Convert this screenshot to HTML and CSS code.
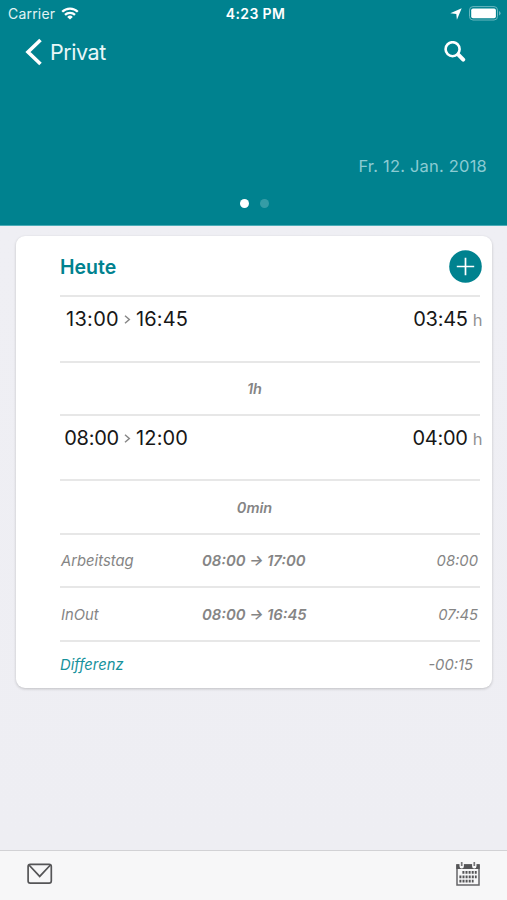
FILE: index.html
```html
<!DOCTYPE html>
<html lang="de">
<head>
<meta charset="utf-8">
<title>Privat</title>
<link rel="stylesheet" href="styles.css">
</head>
<body>
<div class="screen">
  <header class="header">
    <div class="status">
      <div class="status-left"><span class="carrier">Carrier</span>
        <svg class="wifi" width="18" height="13" viewBox="0 0 18 13" fill="none" stroke="#fff" stroke-width="2.3"><path d="M1.2 4.8a11.1 11.1 0 0 1 15.6 0M4 7.8a7.2 7.2 0 0 1 10 0"/><path d="M9 12.6 6.2 9.9a4 4 0 0 1 5.6 0z" fill="#fff" stroke="none"/></svg>
      </div>
      <span class="clock">4:23 PM</span>
      <div class="status-right">
        <svg width="12" height="12" viewBox="0 0 12 12"><path d="M11.7.3 6.9 11.7 6.3 6 .3 5.3z" fill="#fff"/></svg>
        <svg width="33" height="15" viewBox="0 0 33 15"><rect x=".5" y=".6" width="28" height="13.4" rx="3.5" fill="none" stroke="#69b7bf"/><rect x="2.2" y="2.4" width="24.7" height="9.8" rx="1.8" fill="#fff"/><path d="M30 5v4.6q1.6-.8 1.6-2.3T30 5" fill="#69b7bf"/></svg>
      </div>
    </div>
    <nav class="nav">
      <a class="back"><svg width="18" height="28" viewBox="0 0 18 28"><path d="M15.5 2 3 14l12.5 12" fill="none" stroke="#fff" stroke-width="3.6"/></svg><span class="back-label">Privat</span></a>
      <svg class="search" width="22" height="22" viewBox="0 0 22 22" fill="none" stroke="#fff"><circle cx="8.6" cy="8.2" r="7" stroke-width="2.6"/><path d="m14.3 13.7 4.9 4.9" stroke-width="4" stroke-linecap="round"/></svg>
    </nav>
    <div class="date"><span>Fr. 12. Jan. 2018</span></div>
    <div class="dots"><i class="dot dot-on"></i><i class="dot"></i></div>
  </header>
  <main class="main">
    <section class="card">
      <div class="row row-head"><h1 class="title">Heute</h1>
        <svg width="33" height="33" viewBox="0 0 33 33"><circle cx="16.5" cy="16.5" r="16.3" fill="#00828f"/><path d="M16.5 7.8v17.4M7.8 16.5h17.4" stroke="#fff" stroke-width="1.7"/></svg>
      </div>
      <div class="row row-entry"><span class="range"><span class="from from-wide">13:00</span><svg class="chev" width="7" height="9" viewBox="0 0 7 9"><path d="m1 .8 4.3 3.7L1 8.2"/></svg><span class="to">16:45</span></span><span class="amount"><span class="num">03:45</span><span class="unit">h</span></span></div>
      <div class="row row-pause"><span>1h</span></div>
      <div class="row row-entry row-second"><span class="range"><span class="from">08:00</span><svg class="chev" width="7" height="9" viewBox="0 0 7 9"><path d="m1 .8 4.3 3.7L1 8.2"/></svg><span class="to">12:00</span></span><span class="amount"><span class="num">04:00</span><span class="unit">h</span></span></div>
      <div class="row row-pause row-tall"><span>0min</span></div>
      <div class="row row-sum"><span>Arbeitstag</span><span class="span">08:00 → 17:00</span><span class="total">08:00</span></div>
      <div class="row row-sum row-tall"><span>InOut</span><span class="span">08:00 → 16:45</span><span class="total">07:45</span></div>
      <div class="row row-sum row-diff"><span>Differenz</span><span></span><span class="total">-00:15</span></div>
    </section>
  </main>
  <footer class="toolbar">
    <svg width="26" height="22" viewBox="0 0 26 22" fill="none" stroke="#555557" stroke-width="1.7"><rect x="1.1" y="1.3" width="23.2" height="18.8" rx="2.2"/><path d="m2 2 10.7 11.4L23.4 2"/></svg>
    <svg width="24" height="24" viewBox="0 0 24 24"><path d="M1 3h22v20H1z" fill="none" stroke="#666668" stroke-width="1.5"/><path d="M.3 2.3h23.4V7H.3z" fill="#555557"/><path d="M5.7.8v3.4M18.3.8v3.4" stroke="#f7f7f8" stroke-width="4.4" stroke-linecap="round"/><path d="M5.7 0v4M18.3 0v4" stroke="#777779" stroke-width="1.7"/><g stroke="#555557" stroke-width="2.8" stroke-dasharray="2 1.1"><path d="M6.4 10.4h14.3M3.4 14.8h17.3M3.4 19.2h14.2"/></g></svg>
  </footer>
</div>
</body>
</html>
```

FILE: styles.css
```css
* { box-sizing: border-box; }
body { margin: 0; font-family: Inter, "Liberation Sans", sans-serif; background: #eeeef3; }
svg { display: block; flex: none; }
.screen { width: 507px; height: 900px; display: flex; flex-direction: column; }
.header { height: 226px; flex: none; background: #00828f; color: #fff; border-bottom: 1px solid #4bacb7; display: flex; flex-direction: column; }
.status { height: 27px; padding: 0 5px 0 8px; display: grid; grid-template-columns: 1fr auto 1fr; align-items: center; font-size: 14px; line-height: 27px; }
.status-left { display: flex; align-items: center; gap: 6px; }
.carrier { letter-spacing: .2px; color: #e2f3f4; }
.clock { font-weight: 600; letter-spacing: .35px; padding-left: 1px; }
.status-right { display: flex; justify-content: flex-end; align-items: center; gap: 7px; }
.nav { height: 50px; padding: 0 41px 0 25px; display: flex; justify-content: space-between; align-items: center; }
.back { display: flex; align-items: center; gap: 7px; font-size: 21.5px; }
.back-label { color: #e9f7f8; letter-spacing: -.45px; }
.date { margin-top: 76px; height: 26px; line-height: 26px; padding-right: 20px; text-align: right; font-size: 16.5px; color: #8bcbd3; letter-spacing: .2px; }
.dots { height: 10px; margin-top: 19.5px; display: flex; gap: 10px; padding-left: 240px; }
.dot { width: 9px; height: 9px; border-radius: 50%; background: #359ca6; margin-right: 1px; }
.dot-on { background: #fff; }
.main { flex: 1; padding: 10px 15px 0 16px; background: linear-gradient(#efeff4, #eeeef3); }
.card { background: #fff; border-radius: 9px; height: 452px; padding: 0 12px 0 44px; box-shadow: 0 1px 3px rgba(0,0,0,.2); }
.row { height: 53px; border-bottom: 2px solid #e7e7e7; display: flex; align-items: center; color: #858585; }
.row-head { height: 61px; justify-content: space-between; padding-top: 1px; }
.row-head svg { margin-right: -2px; }
.title { margin: 0; padding-top: 1px; font-size: 19.5px; font-weight: 600; color: #00828f; }
.row-entry { height: 66px; align-items: flex-start; justify-content: space-between; padding-top: 9px; font-size: 20px; line-height: 27px; color: #171717; }
.row-second { height: 65px; }
.range, .amount { display: flex; height: 27px; align-items: center; }
.from { width: 59px; text-align: right; letter-spacing: -.25px; }
.from-wide { letter-spacing: .3px; }
.to { letter-spacing: .15px; }
.chev { margin: 0 5px; fill: none; stroke: #888; stroke-width: 1.5; }
.amount { margin-right: -2.5px; gap: 5px; }
.num { letter-spacing: -.25px; }
.unit { font-size: 16.5px; color: #929292; padding-top: 2px; }
.row-pause { justify-content: center; font-size: 14.5px; font-style: italic; font-weight: 600; padding-right: 31px; }
.row-tall { height: 54px; }
.row-sum { display: grid; grid-template-columns: 141px 1fr auto; font-size: 14.8px; font-style: italic; padding: 1px 2px 0 1px; }
.span { font-weight: 600; }
.row-diff { height: 46px; border: 0; padding: 0 7px 0 0; }
.row-diff span:first-child { color: #17929c; }
.toolbar { height: 50px; flex: none; border-top: 1px solid #d2d2d5; background: #f7f7f8; display: flex; justify-content: space-between; align-items: center; padding: 0 27px 3px; }
```
